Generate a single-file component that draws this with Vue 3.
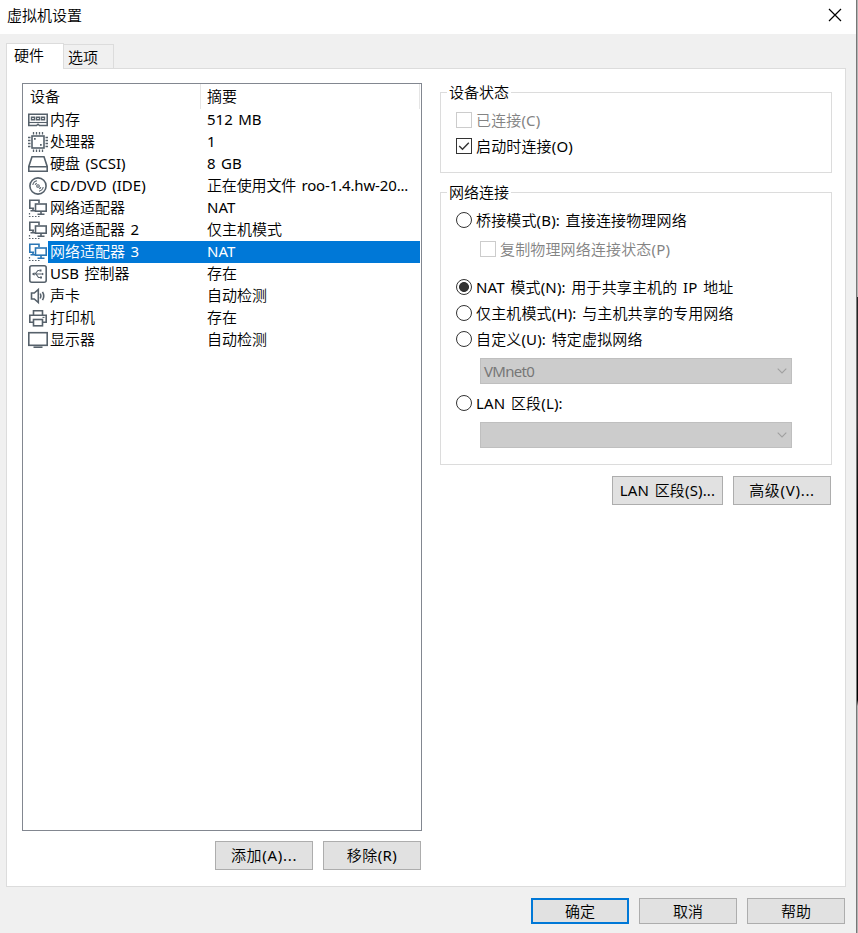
<script setup>
const devices = [
  { icon: 'memory', name: '内存', summary: '512 MB' },
  { icon: 'cpu', name: '处理器', summary: '1' },
  { icon: 'disk', name: '硬盘 (SCSI)', summary: '8 GB' },
  { icon: 'cd', name: 'CD/DVD (IDE)', summary: '正在使用文件 roo-1.4.hw-20...', tight: true },
  { icon: 'net', name: '网络适配器', summary: 'NAT' },
  { icon: 'net', name: '网络适配器 2', summary: '仅主机模式' },
  { icon: 'net', name: '网络适配器 3', summary: 'NAT', selected: true },
  { icon: 'usb', name: 'USB 控制器', summary: '存在' },
  { icon: 'sound', name: '声卡', summary: '自动检测' },
  { icon: 'printer', name: '打印机', summary: '存在' },
  { icon: 'display', name: '显示器', summary: '自动检测' },
]
</script>

<template>
  <div class="screen">
    <div class="dialog">
      <header class="titlebar">
        <span>虚拟机设置</span>
        <svg class="close" width="14" height="14" viewBox="0 0 14 14"><path d="M1 1L13 13M13 1L1 13" /></svg>
      </header>

      <nav class="tabs">
        <div class="tab active">硬件</div>
        <div class="tab">选项</div>
      </nav>

      <main class="panel">
        <section class="left">
          <div class="list">
            <div class="list-head">
              <span class="col-name">设备</span>
              <span class="col-sum">摘要</span>
            </div>
            <div v-for="d in devices" :key="d.name" class="device" :class="{ selected: d.selected }">
              <svg class="icon" width="20" height="22" viewBox="0 0 20 22">
                <g v-if="d.icon === 'memory'">
                  <path d="M.75 5.25H19.25V16.5H11.5L10 15.2L8.5 16.5H.75Z" />
                  <path class="thin" d="M1 13.5H19" />
                  <path class="chip" d="M3.5 8.3H6.5V10.7H3.5ZM8.5 8.3H11.5V10.7H8.5ZM13.5 8.3H16.5V10.7H13.5Z" />
                </g>
                <g v-else-if="d.icon === 'cpu'">
                  <rect x="4" y="5" width="12" height="12" />
                  <path class="pins" d="M5.5 1V3.5M8.5 1V3.5M11.5 1V3.5M14.5 1V3.5M5.5 18.5V21M8.5 18.5V21M11.5 18.5V21M14.5 18.5V21M0 6.5H2.5M0 9.5H2.5M0 12.5H2.5M0 15.5H2.5M17.5 6.5H20M17.5 9.5H20M17.5 12.5H20M17.5 15.5H20" />
                  <path class="solid" d="M6 7H7.7V8.7H6ZM12 13H13.7V14.7H12Z" />
                </g>
                <g v-else-if="d.icon === 'disk'">
                  <path d="M4 3.7H16L19.2 13.5V18.2H.8V13.5ZM.8 13.7H19.2" />
                </g>
                <g v-else-if="d.icon === 'cd'">
                  <circle cx="10" cy="11" r="8.1" />
                  <circle class="thin" cx="10" cy="11" r="1.3" />
                  <path class="thin" d="M4.8 10C5.2 7.8 6.8 6.2 9 5.8M15.2 12C14.8 14.2 13.2 15.8 11 16.2M7.2 9.8C7.5 9 8 8.5 8.8 8.2M12.8 12.2C12.5 13 12 13.5 11.2 13.8" />
                </g>
                <g v-else-if="d.icon === 'net'">
                  <path d="M6 11.2H1.8V3.2H11V6M5 11.5V13.5M2.5 13.8H7" />
                  <rect x="7.5" y="7" width="10.7" height="7.2" />
                  <path d="M13 14.5V17M9.5 17.3H16.5" />
                  <path class="dots" d="M1.5 16V19.5H12" />
                </g>
                <g v-else-if="d.icon === 'usb'">
                  <rect x="1.8" y="2.8" width="16.4" height="16.4" rx="2" />
                  <path class="thin" d="M5 11H15M7 11L10 7.5H11.5M8 11L10.5 14.5H12" />
                  <path class="solid" d="M3.8 11L6.5 9.3V12.7ZM11.5 6.5H13.5V8.5H11.5ZM12 13.5H14V15.5H12ZM14 9.8L16 11L14 12.2Z" />
                </g>
                <g v-else-if="d.icon === 'sound'">
                  <path d="M3.5 8H6.3L10.3 4.5V17.5L6.3 14H3.5ZM12.3 8.5Q13.6 11 12.3 13.5M14.5 6.8Q17 11 14.5 15.2" />
                </g>
                <g v-else-if="d.icon === 'printer'">
                  <path d="M5.5 8V3.7H14.5V8M5 15.2H1.8V8.2H18.2V15.2H15" />
                  <rect x="5.5" y="12.5" width="9" height="6.3" />
                  <path class="thin" d="M14.5 10.4H16.5" />
                </g>
                <g v-else>
                  <rect x=".8" y="3.7" width="18.4" height="12.6" />
                  <path d="M5.5 18.2H14.5" />
                </g>
              </svg>
              <div class="cells">
                <span class="name">{{ d.name }}</span>
                <span :class="{ tight: d.tight }">{{ d.summary }}</span>
              </div>
            </div>
          </div>
          <div class="actions">
            <button>添加(A)...</button>
            <button class="plain">移除(R)</button>
          </div>
        </section>

        <section class="right">
          <fieldset class="status">
            <legend>设备状态</legend>
            <label class="row disabled"><i class="box"></i>已连接(C)</label>
            <label class="row"><i class="box"><svg width="14" height="14" viewBox="0 0 14 14"><path d="M2.2 7L5.5 10.3L11.8 3.7" /></svg></i>启动时连接(O)</label>
          </fieldset>

          <fieldset class="network">
            <legend>网络连接</legend>
            <label class="row"><i class="radio"></i>桥接模式(B): 直接连接物理网络</label>
            <label class="row sub disabled"><i class="box"></i>复制物理网络连接状态(P)</label>
            <label class="row nat"><i class="radio on"></i>NAT 模式(N): 用于共享主机的 IP 地址</label>
            <label class="row"><i class="radio"></i>仅主机模式(H): 与主机共享的专用网络</label>
            <label class="row"><i class="radio"></i>自定义(U): 特定虚拟网络</label>
            <div class="combo"><span>VMnet0</span><svg width="10" height="6" viewBox="0 0 10 6"><path d="M.7 .7L5 5L9.3 .7" /></svg></div>
            <label class="row"><i class="radio"></i>LAN 区段(L):</label>
            <div class="combo"><span></span><svg width="10" height="6" viewBox="0 0 10 6"><path d="M.7 .7L5 5L9.3 .7" /></svg></div>
          </fieldset>

          <div class="actions">
            <button class="wide">LAN 区段(S)...</button>
            <button>高级(V)...</button>
          </div>
        </section>
      </main>

      <footer class="footer">
        <button class="primary">确定</button>
        <button>取消</button>
        <button>帮助</button>
      </footer>
    </div>
    <aside class="backdrop"></aside>
  </div>
</template>

<style>
body {
  overflow: hidden;
}
</style>

<style scoped>
* {
  box-sizing: border-box;
}
.screen {
  display: flex;
  width: 858px;
  height: 933px;
  font: 15px/22px "Noto Sans", "Noto Sans CJK SC DemiLight", "Noto Sans CJK SC Light", "Noto Sans CJK SC", sans-serif;
  word-spacing: 1.6px;
  color: #000;
  white-space: nowrap;
}
.dialog {
  width: 856px;
  background: #f0f0f0;
}
.backdrop {
  width: 2px;
  border-left: 1px solid #777;
  background: linear-gradient(#b4b4b4 297px, #222 297px, #333 420px, #000 510px, #000 700px, #b4b4b4 706px);
}
.titlebar {
  display: flex;
  justify-content: space-between;
  height: 34px;
  padding: 4px 14px 0 7px;
  background: #fff;
}
.close {
  margin-top: 4px;
  fill: none;
  stroke: #000;
  stroke-width: 1.2;
}
.tabs {
  display: flex;
  align-items: flex-end;
  height: 35px;
  padding-left: 6px;
}
.tab {
  width: 50px;
  height: 24px;
  margin-bottom: 1px;
  padding-left: 4px;
  border: 1px solid #dcdcdc;
  border-width: 1px 1px 0 0;
  line-height: 24px;
}
.tab.active {
  position: relative;
  width: 58px;
  height: 26px;
  margin-bottom: 0;
  padding-left: 7px;
  border-width: 1px 1px 0 1px;
  background: #fff;
  line-height: 23px;
}
.panel {
  display: flex;
  gap: 18px;
  width: 840px;
  height: 819px;
  margin: -1px 0 0 6px;
  padding: 14px 13px 0 15px;
  border: 1px solid #dcdcdc;
  background: #fff;
}
.left {
  width: 400px;
}
.list {
  height: 748px;
  border: 1px solid #828790;
}
.list-head {
  display: flex;
  width: 397px;
  height: 25px;
  border-right: 1px solid #e5e5e5;
  line-height: 25px;
}
.col-name {
  width: 178px;
  padding-left: 7px;
  border-right: 1px solid #e5e5e5;
}
.col-sum {
  padding-left: 6px;
}
.device {
  display: flex;
  width: 397px;
  height: 22px;
  padding-left: 5px;
}
.icon {
  fill: none;
  stroke: #56616b;
  stroke-width: 1.6;
}
.icon .pins {
  stroke-width: 1.3;
}
.icon .thin {
  stroke-width: 1.1;
}
.icon .chip {
  stroke-width: 1.4;
}
.icon .solid {
  fill: #56616b;
  stroke: none;
}
.icon .dots {
  stroke-width: 1.2;
  stroke-dasharray: 1.5 1.5;
}
.selected .icon {
  stroke: #2a76b5;
}
.selected .icon .dots {
  stroke: #56616b;
}
.cells {
  display: flex;
  flex: 1;
  padding-left: 2px;
  line-height: 21px;
}
.selected .cells {
  background: #0078d7;
  color: #fff;
}
.name {
  width: 157px;
}
.tight {
  letter-spacing: -0.15px;
}
.actions {
  display: flex;
  justify-content: flex-end;
  gap: 10px;
  padding: 10px 1px 0 0;
}
button {
  width: 98px;
  height: 29px;
  padding: 0 0 2px;
  border: 1px solid #adadad;
  background: #e1e1e1;
  font: inherit;
  color: #000;
}
.actions button {
  letter-spacing: 0.7px;
}
.actions .plain {
  letter-spacing: 0.4px;
}
.actions .wide {
  width: 111px;
  letter-spacing: 0.15px;
  word-spacing: 1.6px;
}
.right {
  width: 392px;
}
.right .actions {
  padding-top: 11px;
}
fieldset {
  min-width: 0;
  margin: 0;
  padding: 4px 15px 0 6px;
  border: 1px solid #dcdcdc;
}
legend {
  height: 21px;
  padding: 0 2px;
  line-height: 20px;
}
.status {
  height: 91px;
  margin-top: -1px;
}
.network {
  height: 283px;
  margin-top: 9px;
}
.row {
  display: flex;
  align-items: center;
  gap: 4px;
  height: 26px;
  padding-left: 9px;
  letter-spacing: 0.15px;
}
.sub {
  margin-top: 3px;
  padding-left: 33px;
}
.nat {
  margin-top: 12px;
}
.disabled {
  color: #838383;
}
.box,
.radio {
  flex: none;
  width: 16px;
  height: 16px;
  border: 1px solid #333;
  background: #fff;
}
.box svg {
  display: block;
  fill: none;
  stroke: #333;
  stroke-width: 1.4;
}
.disabled .box {
  border-color: #ccc;
}
.radio {
  border-radius: 50%;
}
.radio.on {
  background: radial-gradient(circle, #333 4.6px, #fff 5.3px);
}
.combo {
  display: flex;
  align-items: center;
  justify-content: space-between;
  width: 312px;
  height: 26px;
  margin: 6px 0 6px 33px;
  padding: 0 4px 0 3px;
  border: 1px solid #bfbfbf;
  background: #ccc;
  color: #777;
  letter-spacing: -0.7px;
}
.combo svg {
  fill: none;
  stroke: #a0a0a0;
  stroke-width: 1.1;
}
.footer {
  display: flex;
  justify-content: flex-end;
  gap: 10px;
  padding: 11px 11px 0 0;
}
.footer button {
  height: 26px;
  padding-bottom: 1px;
}
.footer .primary {
  border: 2px solid #0078d7;
}
</style>
